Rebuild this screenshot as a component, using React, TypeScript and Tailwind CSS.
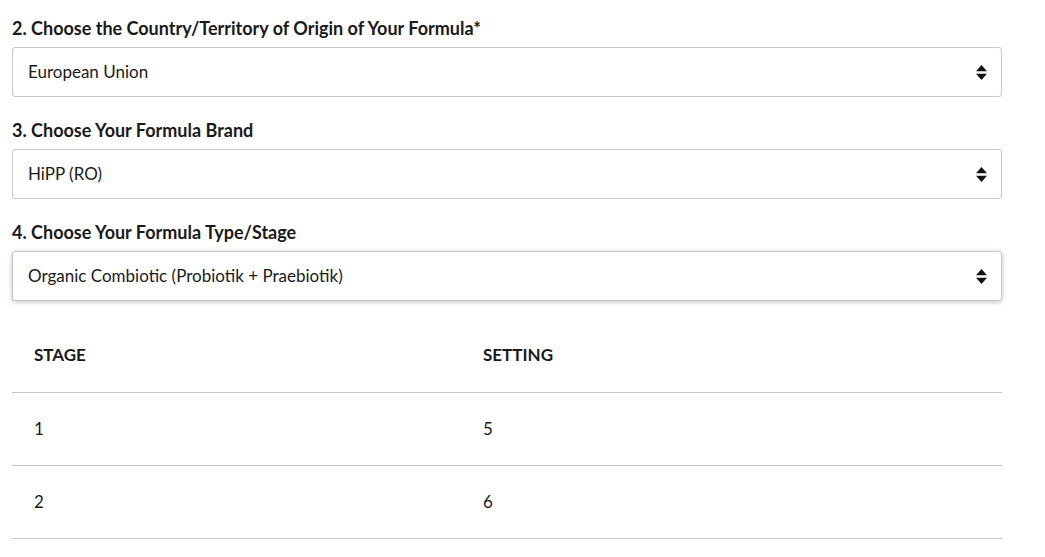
import React from "react";

const fields = [
  { label: "2. Choose the Country/Territory of Origin of Your Formula*", value: "European Union", focused: false },
  { label: "3. Choose Your Formula Brand", value: "HiPP (RO)", focused: false },
  { label: "4. Choose Your Formula Type/Stage", value: "Organic Combiotic (Probiotik + Praebiotik)", focused: true },
];

const rows = [
  { stage: "1", setting: "5" },
  { stage: "2", setting: "6" },
];

const SortArrows = () => (
  <svg width="11" height="15" viewBox="0 0 11 15" className="shrink-0">
    <path d="M5.5 0 L11 6.3 L0 6.3 Z" fill="#111" />
    <path d="M0 8.7 L11 8.7 L5.5 15 Z" fill="#111" />
  </svg>
);

const App: React.FC = () => {
  return (
    <div
      className="bg-white min-h-screen w-[1045px] h-[557px] overflow-hidden text-[#1a1a1a]"
      style={{ fontFamily: "Lato, 'Open Sans', sans-serif" }}
    >
      <div className="w-[990px] ml-3 pt-4">
        {fields.map((field, index) => (
          <div key={index} className={index === 2 ? "mb-5" : "mb-[21px]"}>
            <label className="block text-[18px] font-bold leading-6 mb-[7px]">
              {field.label}
            </label>
            <div
              className={`flex items-center justify-between h-[50px] pl-[15px] pr-[14px] border border-[#c9c9c9] rounded-[3px] bg-white ${
                field.focused ? "shadow-[0_1px_5px_rgba(0,0,0,0.25)]" : ""
              }`}
            >
              <span className="text-[17px]">{field.value}</span>
              <SortArrows />
            </div>
          </div>
        ))}

        <div className="text-[17px] leading-6">
          <div className="grid grid-cols-[449px_1fr] h-[72px] items-center pb-1 border-b border-[#c6c6c6] font-bold">
            <div className="pl-[22px]">STAGE</div>
            <div className="pl-[22px]">SETTING</div>
          </div>
          {rows.map((row) => (
            <div
              key={row.stage}
              className="grid grid-cols-[449px_1fr] h-[73px] items-center border-b border-[#c6c6c6]"
            >
              <div className="pl-[22px]">{row.stage}</div>
              <div className="pl-[22px]">{row.setting}</div>
            </div>
          ))}
        </div>
      </div>
    </div>
  );
};

export default App;
